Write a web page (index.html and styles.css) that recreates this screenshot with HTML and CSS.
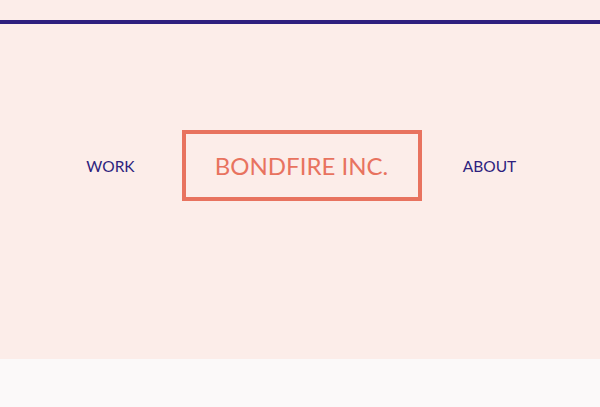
FILE: index.html
```html
<!DOCTYPE html>
<html>
<head>
<meta charset="utf-8">
<link rel="stylesheet" href="styles.css">
</head>
<body>
<header class="hero">
  <div class="rule"></div>
  <nav class="nav">
    <a class="nav-link" href="#">WORK</a>
    <a class="brand" href="#">BONDFIRE INC.</a>
    <a class="nav-link" href="#">ABOUT</a>
  </nav>
</header>
<main class="content"></main>
</body>
</html>
```

FILE: styles.css
```css
* { box-sizing: border-box; }
html, body { margin: 0; padding: 0; }
body {
  background: #fbf9f9;
  font-family: Lato, "Noto Sans", sans-serif;
  height: 407px;
  overflow: hidden;
}
.hero {
  background: #fcede9;
  padding-top: 20px;
  height: 359px;
}
.rule {
  height: 4px;
  background: #2e1f7e;
}
.nav {
  display: flex;
  justify-content: center;
  align-items: center;
  padding-top: 106px;
}
.nav-link {
  width: 90px;
  text-align: center;
  color: #2e1f7e;
  text-decoration: none;
  font-size: 15.5px;
  line-height: 20px;
}
.brand {
  width: 240px;
  height: 71px;
  margin: 0 23px 0 26px;
  border: 4px solid #e8735f;
  color: #e8735f;
  text-decoration: none;
  font-size: 24px;
  display: flex;
  align-items: center;
  justify-content: center;
}
.content {
  background: #fbf9f9;
}
```
